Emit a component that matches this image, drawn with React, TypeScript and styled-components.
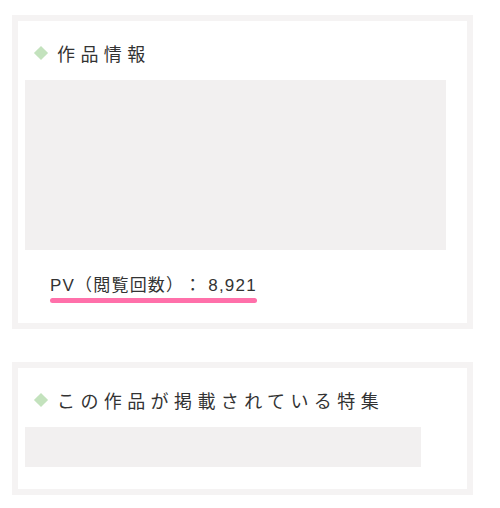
import React from 'react';
import styled, { createGlobalStyle } from 'styled-components';

const GlobalStyle = createGlobalStyle`
  body {
    margin: 0;
    background: #ffffff;
    font-family: "Liberation Sans", "Noto Sans CJK JP", sans-serif;
    color: #333333;
  }
`;

const Page = styled.div`
  display: flex;
  flex-direction: column;
  gap: 33px;
  padding: 15px 0 0 12px;
`;

const Card = styled.section<{ $bottom: number }>`
  width: 442px;
  border: 6px solid #f5f3f3;
  background: #ffffff;
  padding: 0 0 ${(p) => p.$bottom}px 7px;
`;

const Heading = styled.h2`
  display: flex;
  align-items: center;
  gap: 11px;
  margin: 0 0 15px;
  padding: 20px 0 0 10px;
  height: 24px;
  box-sizing: content-box;
  font-family: "Noto Sans CJK JP", sans-serif;
  font-size: 18px;
  line-height: 24px;
  font-weight: 400;
  letter-spacing: 0.3em;
  color: #333333;
`;

const Diamond = styled.span`
  width: 10px;
  height: 10px;
  margin-left: 1px;
  flex-shrink: 0;
  transform: rotate(45deg);
  background: #c3e2bd;
`;

const Placeholder = styled.div<{ $w: number; $h: number }>`
  width: ${(p) => p.$w}px;
  height: ${(p) => p.$h}px;
  background: #f2f0f0;
`;

const StatRow = styled.div`
  padding: 25px 0 0 20px;
`;

const Marker = styled.span`
  display: inline-block;
  padding: 0 5px;
  font-size: 17px;
  line-height: 22px;
  letter-spacing: 0.07em;
  text-spacing-trim: space-all;
  color: #333333;

  &::after {
    content: '';
    display: block;
    height: 5px;
    margin-top: 1px;
    border-radius: 3px;
    background: #ff70aa;
  }
`;

export default function App() {
  return (
    <>
      <GlobalStyle />
      <Page>
        <Card $bottom={20}>
          <Heading>
            <Diamond />
            作品情報
          </Heading>
          <Placeholder $w={421} $h={170} />
          <StatRow>
            <Marker>PV（閲覧回数）： 8,921</Marker>
          </StatRow>
        </Card>
        <Card $bottom={22}>
          <Heading>
            <Diamond />
            この作品が掲載されている特集
          </Heading>
          <Placeholder $w={396} $h={40} />
        </Card>
      </Page>
    </>
  );
}
